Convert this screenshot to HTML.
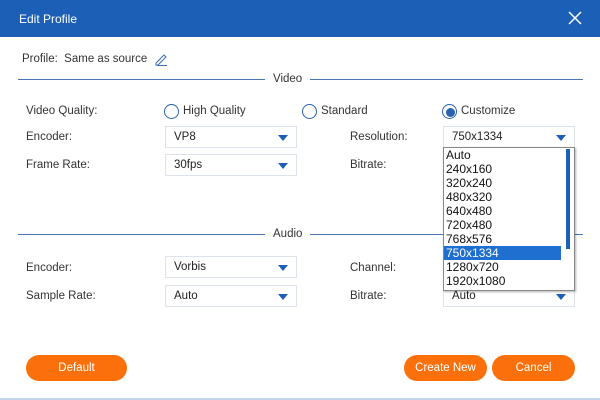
<!DOCTYPE html>
<html><head><style>
*{margin:0;padding:0;box-sizing:border-box}
body{width:600px;height:400px;background:#fff;position:relative;overflow:hidden;font-family:"Liberation Sans",Tahoma,sans-serif;font-size:11.5px;color:#333}
.a{position:absolute;white-space:nowrap}
.title{left:0;top:0;width:600px;height:37px;background:#1b5fb6}
.sel{position:absolute;width:132px;height:22px;border:1px solid #dde3ec;background:#fff;padding:4px 0 0 8px;font-size:11.5px;color:#222}
.sel:after{content:"";position:absolute;right:8px;top:8px;border-left:5px solid transparent;border-right:5px solid transparent;border-top:6px solid #1b5fb6}
.rad{position:absolute;width:15px;height:15px;border:1.5px solid #2a62b0;border-radius:50%}
.btn{position:absolute;height:26px;border-radius:13px;background:#fb700a;color:#fff;text-align:center;line-height:26px;font-size:11.5px}
.line{position:absolute;height:1px;background:#4a76b4}
.list{position:absolute;left:443px;top:147px;width:132px;height:144px;border:1px solid #888;background:#fff;box-shadow:1px 1px 2px rgba(0,0,0,.3)}
.list div{height:14px;line-height:14px;padding-left:2px;font-size:12px;color:#111}
</style></head><body>
<div class="a title"></div>
<div class="a" style="left:19px;top:12px;color:#fff;font-size:12px">Edit Profile</div>
<svg class="a" style="left:568px;top:11px" width="14" height="14"><path d="M1 1L13 13M13 1L1 13" stroke="#fff" stroke-width="1.5"/></svg>
<div class="a" style="left:22px;top:53px">Profile:&nbsp; Same as source</div>
<svg class="a" style="left:154px;top:52px" width="14" height="14"><path d="M2 11L10 3L12 5L4 13L2 13Z M3 13.5H13" stroke="#3a6db5" fill="none" stroke-width="1"/></svg>
<div class="line" style="left:18px;top:79px;width:247px"></div>
<div class="a" style="left:273px;top:73px">Video</div>
<div class="line" style="left:310px;top:79px;width:273px"></div>
<div class="a" style="left:26px;top:105px">Video Quality:</div>
<div class="rad" style="left:164px;top:104px"></div><div class="a" style="left:183px;top:105px">High Quality</div>
<div class="rad" style="left:302px;top:104px"></div><div class="a" style="left:321px;top:105px">Standard</div>
<div class="rad" style="left:442px;top:104px"></div><div class="a" style="left:446px;top:108px;width:9px;height:9px;border-radius:50%;background:#2a62b0"></div><div class="a" style="left:461px;top:105px">Customize</div>
<div class="a" style="left:26px;top:131px">Encoder:</div>
<div class="sel" style="left:165px;top:126px">VP8</div>
<div class="a" style="left:26px;top:159px">Frame Rate:</div>
<div class="sel" style="left:165px;top:154px">30fps</div>
<div class="a" style="left:350px;top:131px">Resolution:</div>
<div class="sel" style="left:443px;top:126px">750x1334</div>
<div class="a" style="left:350px;top:159px">Bitrate:</div>
<div class="line" style="left:18px;top:234px;width:247px"></div>
<div class="a" style="left:273px;top:228px">Audio</div>
<div class="line" style="left:310px;top:234px;width:273px"></div>
<div class="a" style="left:26px;top:262px">Encoder:</div>
<div class="sel" style="left:165px;top:256px">Vorbis</div>
<div class="a" style="left:26px;top:290px">Sample Rate:</div>
<div class="sel" style="left:165px;top:285px">Auto</div>
<div class="a" style="left:350px;top:262px">Channel:</div>
<div class="a" style="left:350px;top:290px">Bitrate:</div>
<div class="sel" style="left:443px;top:285px">Auto</div>
<div class="list">
<div>Auto</div><div>240x160</div><div>320x240</div><div>480x320</div><div>640x480</div><div>720x480</div><div>768x576</div>
<div style="background:#1e6fd0;color:#fff;width:117px">750x1334</div><div>1280x720</div><div>1920x1080</div>
<span style="position:absolute;left:122px;top:1px;width:4px;height:100px;background:#1b5fb6"></span>
</div>
<div class="btn" style="left:26px;top:355px;width:101px">Default</div>
<div class="btn" style="left:404px;top:355px;width:83px">Create New</div>
<div class="btn" style="left:492px;top:355px;width:83px">Cancel</div>
<div class="a" style="left:0;top:398px;width:600px;height:2px;background:#c5d5ea"></div>
</body></html>
